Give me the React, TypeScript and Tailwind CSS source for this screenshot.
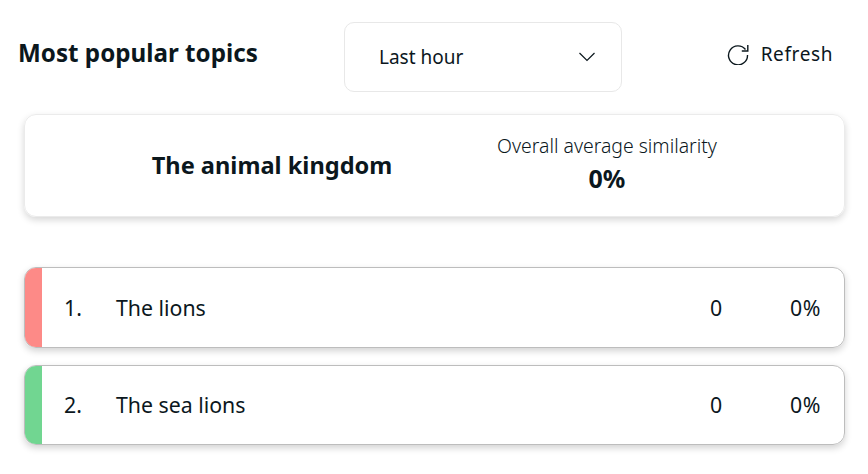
import React from 'react';

const topics = [
  { rank: '1.', name: 'The lions', count: 0, share: '0%', color: 'bg-[#fd8a87]', height: 'h-[81px]' },
  { rank: '2.', name: 'The sea lions', count: 0, share: '0%', color: 'bg-[#71d691]', height: 'h-[80px]' },
];

export default function App() {
  return (
    <div className="w-[868px] h-[474px] overflow-hidden bg-white text-[#0b171d] font-['Noto_Sans',sans-serif]">
      <header className="flex items-start pt-[22px] pl-[18px] pr-[35px] h-[114px]">
        <h1 className="w-[326px] h-[62px] flex items-center text-[24.2px] font-bold">Most popular topics</h1>
        <button className="w-[278px] h-[70px] flex items-center justify-between pl-[34px] pr-[25px] border border-[#e8e8e8] rounded-[10px] text-[19px]">
          Last hour
          <svg width="18" height="10" viewBox="0 0 18 10" fill="none" stroke="currentColor" strokeWidth="1.2">
            <path d="M1.5 1 L9 8.5 L16.5 1" />
          </svg>
        </button>
        <button className="ml-auto h-[64px] flex items-center gap-[12px] text-[19px] tracking-[0.6px]">
          <svg width="22" height="22" viewBox="0 0 22 22" fill="none" stroke="currentColor" strokeWidth="1.4">
            <path d="M18.5 6.5 A9.5 9.5 0 1 0 20.5 12" />
            <path d="M20.8 2 V8 H14.8" />
          </svg>
          Refresh
        </button>
      </header>

      <section className="ml-[24px] w-[821px] h-[103px] flex items-center border border-[#ebebeb] rounded-[12px] shadow-[0_3px_7px_rgba(0,0,0,0.16)]">
        <h2 className="w-[494px] text-center text-[23.6px] font-bold">The animal kingdom</h2>
        <div className="w-[176px] flex flex-col items-center -mt-[4px]">
          <p className="text-[19.4px] leading-[24px] font-light whitespace-nowrap">Overall average similarity</p>
          <p className="mt-[5px] text-[25px] leading-[30px] font-bold">0%</p>
        </div>
      </section>

      <div className="mt-[50px] ml-[24px] w-[821px] flex flex-col gap-[17px]">
        {topics.map((topic) => (
          <div
            key={topic.rank}
            className={`${topic.height} flex items-center overflow-hidden border border-[#bdbdbd] rounded-[12px] shadow-[0_3px_7px_rgba(0,0,0,0.18)] text-[21.3px]`}
          >
            <div className={`${topic.color} w-[17px] h-full shrink-0`} />
            <span className="ml-[22px] w-[52px]">{topic.rank}</span>
            <span className="flex-1">{topic.name}</span>
            <span className="w-[30px] text-center">{topic.count}</span>
            <span className="w-[113px] pr-[23px] text-right tracking-[0.6px]">{topic.share}</span>
          </div>
        ))}
      </div>
    </div>
  );
}
